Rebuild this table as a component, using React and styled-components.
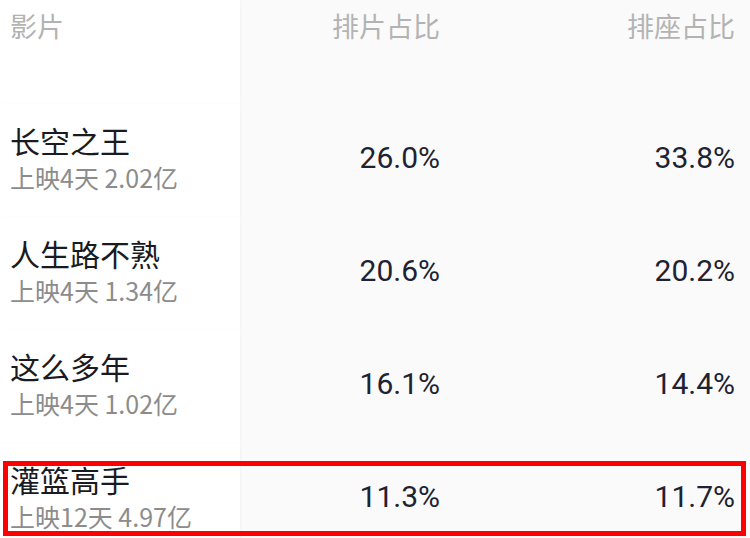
import React from 'react';
import styled, { createGlobalStyle } from 'styled-components';

const rows = [
  { name: '长空之王', info: '上映4天 2.02亿', film: '26.0%', seat: '33.8%' },
  { name: '人生路不熟', info: '上映4天 1.34亿', film: '20.6%', seat: '20.2%' },
  { name: '这么多年', info: '上映4天 1.02亿', film: '16.1%', seat: '14.4%' },
  { name: '灌篮高手', info: '上映12天 4.97亿', film: '11.3%', seat: '11.7%', highlight: true },
];

function App() {
  return (
    <>
      <GlobalStyle />
      <Table>
        <Header>
          <NameCell><HeadText>影片</HeadText></NameCell>
          <NumCell><HeadText>排片占比</HeadText></NumCell>
          <NumCell><HeadText>排座占比</HeadText></NumCell>
        </Header>
        {rows.map((r) => (
          <Row key={r.name}>
            <NameCell>
              <Title>{r.name}</Title>
              <Info>{r.info}</Info>
            </NameCell>
            <NumCell><Percent>{r.film}</Percent></NumCell>
            <NumCell><Percent>{r.seat}</Percent></NumCell>
            {r.highlight && <Mark />}
          </Row>
        ))}
      </Table>
    </>
  );
}

const GlobalStyle = createGlobalStyle`
  html, body {
    margin: 0;
    padding: 0;
    background: #fafafa;
    overflow: hidden;
  }
  body {
    font-family: "Noto Sans CJK SC", "Noto Sans", sans-serif;
  }
`;

const Table = styled.div`
  width: 750px;
  height: 538px;
  overflow: hidden;
  background: #fafafa;
`;

const Header = styled.div`
  display: grid;
  grid-template-columns: 240px 200px 295px;
  height: 104px;
`;

const Row = styled.div`
  position: relative;
  display: grid;
  grid-template-columns: 240px 200px 295px;
  height: 113px;
`;

const NameCell = styled.div`
  background: #fff;
  box-shadow: 1px 0 2px rgba(0, 0, 0, 0.03);
  padding-left: 10px;
  display: flex;
  flex-direction: column;
  justify-content: center;
  padding-bottom: 4px;
  ${Header} & {
    justify-content: flex-start;
    padding-top: 9px;
    padding-bottom: 0;
  }
`;

const NumCell = styled.div`
  display: flex;
  align-items: center;
  justify-content: flex-end;
  padding-bottom: 6px;
  ${Header} & {
    align-items: flex-start;
    padding-top: 9px;
    padding-bottom: 0;
  }
`;

const HeadText = styled.span`
  font-size: 27px;
  line-height: 34px;
  color: #b3b3b3;
`;

const Title = styled.div`
  font-size: 30px;
  line-height: 36px;
  color: #1a1b22;
  white-space: nowrap;
`;

const Info = styled.div`
  font-size: 25px;
  line-height: 38px;
  color: #8c8c8c;
  white-space: nowrap;
`;

const Percent = styled.span`
  font-family: Roboto, "Noto Sans", sans-serif;
  font-size: 30px;
  color: #1e2233;
`;

const Mark = styled.div`
  position: absolute;
  left: 3px;
  top: 18px;
  width: 743px;
  height: 75px;
  box-sizing: border-box;
  border: 5px solid #ff0000;
  pointer-events: none;
`;

export default App;
